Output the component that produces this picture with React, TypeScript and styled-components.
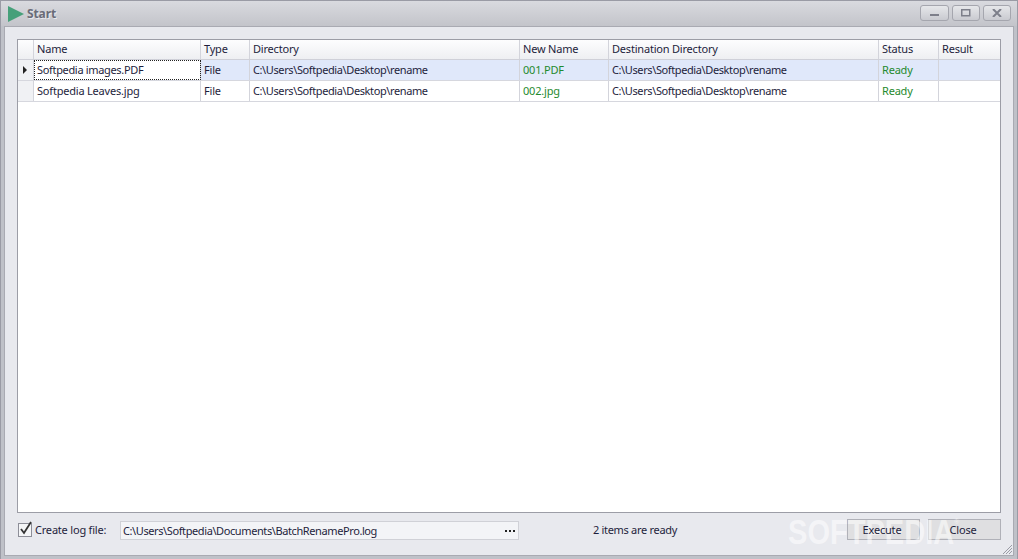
import React from "react";
import styled, { createGlobalStyle } from "styled-components";

const Global = createGlobalStyle`
  html, body { margin: 0; padding: 0; width: 1018px; height: 559px; overflow: hidden; }
  body { font-family: "Noto Sans", "DejaVu Sans", sans-serif; font-size: 11px; color: #1e1e3c; letter-spacing: -0.2px; }
`;

const Window = styled.div`
  width: 1018px; height: 559px; box-sizing: border-box;
  display: flex; flex-direction: column; position: relative;
  background: #bfc1c8; border: 1px solid #9a9ba5; border-bottom: 0;
`;
const TitleBar = styled.div`
  height: 25px; flex: none; display: flex; align-items: center; padding: 0 6px 0 7px;
  background: linear-gradient(#d9dadf, #c3c4ca);
`;
const TitleText = styled.div`
  margin-left: 3px; font-weight: 700; font-size: 12px; letter-spacing: -0.1px; color: #6a6c78; text-shadow: 1px 1px 0 #e8e8ec; flex: 1;
`;
const WinButtons = styled.div`display: flex; gap: 3px; margin-top: -1px;`;
const WinButton = styled.div<{ $w: number }>`
  width: ${(p) => p.$w}px; height: 16px; box-sizing: border-box; border: 1px solid #a5a6ae; border-radius: 3px;
  background: linear-gradient(#e6e7ea, #c9cad0); display: flex; align-items: center; justify-content: center;
`;
const Panel = styled.div`
  flex: 1; margin: 0 3px 3px 3px; background: #e8e9ee; border: 1px solid #a9aab2;
  padding: 12px 12px 0 12px; display: flex; flex-direction: column; min-height: 0; position: relative;
`;
const Grid = styled.div`
  height: 474px; flex: none; box-sizing: border-box; border: 1px solid #9c9da6; background: #fff;
`;
const Row = styled.div<{ $head?: boolean; $sel?: boolean }>`
  display: grid; grid-template-columns: 16px 167px 49px 270px 89px 270px 60px 61px;
  height: ${(p) => (p.$head ? 20 : 21)}px; box-sizing: border-box;
  border-bottom: 1px solid ${(p) => (p.$head ? "#cfd0d8" : "#d6d7de")};
  background: ${(p) => (p.$head ? "linear-gradient(#fdfdfe, #eeeff2)" : p.$sel ? "#e0e8fa" : "#fff")};
`;
const Cell = styled.div<{ $green?: boolean; $focus?: boolean; $last?: boolean; $head?: boolean; $path?: boolean }>`
  box-sizing: border-box; padding: 0 3px ${(p) => (p.$head ? 2 : 1)}px; display: flex; align-items: center; white-space: nowrap; overflow: hidden;
  border-right: ${(p) => (p.$last ? "0" : "1px solid #d3d4db")};
  color: ${(p) => (p.$green ? "#1f8a2e" : "#1e1e3c")};
  ${(p) => (p.$path ? "letter-spacing: -0.39px;" : "")}
  ${(p) => (p.$focus ? "background:#fff; outline: 1px dotted #222; outline-offset: -1px; letter-spacing: -0.33px;" : "")}
`;
const Indicator = styled(Cell)<{ $bare?: boolean }>`
  background: ${(p) => (p.$bare ? "linear-gradient(#fdfdfe, #eeeff2)" : "#f0f1f4")};
  justify-content: center; padding: 0 1px 0 0;
`;
const Arrow = styled.span`
  width: 0; height: 0; border-left: 4px solid #222; border-top: 4px solid transparent; border-bottom: 4px solid transparent;
`;
const Footer = styled.div`
  height: 45px; display: flex; align-items: center; padding-bottom: 9px; box-sizing: border-box;
`;
const Check = styled.div`
  width: 12px; height: 12px; flex: none; border: 1px solid #8d8e98; background: #f4f5f7; position: relative; margin: 0 3px 0 1px;
`;
const Tick = styled.svg`position: absolute; left: -1px; top: -4px;`;
const LogLabel = styled.div`width: 85px; flex: none;`;
const PathBox = styled.div`
  width: 399px; flex: none; height: 19px; margin-top: 1px; box-sizing: border-box; border: 1px solid #d0d1d7; background: #f3f4f7;
  display: flex; align-items: center; padding: 1px 2px 0; justify-content: space-between; letter-spacing: -0.4px;
`;
const Status = styled.div`width: 232px; flex: none; text-align: center; margin-top: 0; letter-spacing: -0.3px;`;
const ActionRow = styled.div`margin-left: auto; display: flex; gap: 8px; margin-bottom: 1px;`;
const ActionButton = styled.div`
  width: 73px; height: 21px; box-sizing: border-box; border: 1px solid #b0b1b8; background: #dfdfe1; padding: 1px 3px 0 0;
  display: flex; align-items: center; justify-content: center;
`;
const ActionLabel = styled.span`position: relative; z-index: 2;`;
const Grip = styled.svg`position: absolute; right: 0; bottom: 0;`;
const Watermark = styled.div`
  position: absolute; left: 787px; top: 513px; z-index: 1; font-family: "Liberation Sans", sans-serif; font-size: 35px; font-weight: 700;
  letter-spacing: 0; color: rgba(255,255,255,0.55); pointer-events: none; line-height: 35px; white-space: nowrap;
  transform: scaleX(0.83); transform-origin: left top;
`;
const WatermarkMark = styled.sup`font-size: 8px; font-weight: 400; vertical-align: 20px; line-height: 0;`;

const cols = ["Name", "Type", "Directory", "New Name", "Destination Directory", "Status", "Result"];
const dir = "C:\\Users\\Softpedia\\Desktop\\rename";
const rows = [
  { name: "Softpedia images.PDF", out: "001.PDF", sel: true },
  { name: "Softpedia Leaves.jpg", out: "002.jpg", sel: false },
];

export default function App() {
  return (
    <>
      <Global />
      <Window>
        <TitleBar>
          <svg width="16" height="16" viewBox="0 0 16 16"><path d="M0 0L16 8L0 16Z" fill="#46a07a" /></svg>
          <TitleText>Start</TitleText>
          <WinButtons>
            <WinButton $w={29}><svg width="10" height="8"><rect x="0" y="5" width="9" height="2" fill="#7d7f8a" /></svg></WinButton>
            <WinButton $w={28}><svg width="10" height="8"><rect x="0.75" y="0.75" width="8" height="6" fill="none" stroke="#7d7f8a" strokeWidth="1.5" /></svg></WinButton>
            <WinButton $w={28}><svg width="10" height="8"><path d="M1 0L9 8M9 0L1 8" stroke="#7d7f8a" strokeWidth="2" /></svg></WinButton>
          </WinButtons>
        </TitleBar>
        <Panel>
          <Grid>
            <Row $head>
              <Indicator $bare />
              {cols.map((c, i) => <Cell key={c} $head $last={i === 6}>{c}</Cell>)}
            </Row>
            {rows.map((r) => (
              <Row key={r.name} $sel={r.sel}>
                <Indicator>{r.sel && <Arrow />}</Indicator>
                <Cell $focus={r.sel}>{r.name}</Cell>
                <Cell>File</Cell>
                <Cell $path>{dir}</Cell>
                <Cell $green>{r.out}</Cell>
                <Cell $path>{dir}</Cell>
                <Cell $green>Ready</Cell>
                <Cell $last />
              </Row>
            ))}
          </Grid>
          <Footer>
            <Check>
              <Tick width="16" height="16" viewBox="0 0 16 16"><path d="M3 9L6 13L13 2" fill="none" stroke="#333" strokeWidth="1.8" /></Tick>
            </Check>
            <LogLabel>Create log file:</LogLabel>
            <PathBox>
              C:\Users\Softpedia\Documents\BatchRenamePro.log
              <svg width="12" height="4"><path d="M1 1h2v2H1zM5 1h2v2H5zM9 1h2v2H9z" fill="#222" /></svg>
            </PathBox>
            <Status>2 items are ready</Status>
            <ActionRow>
              <ActionButton><ActionLabel>Execute</ActionLabel></ActionButton>
              <ActionButton><ActionLabel>Close</ActionLabel></ActionButton>
            </ActionRow>
          </Footer>
          <Grip width="12" height="12" viewBox="0 0 12 12"><path d="M11 2L2 11M11 5L5 11M11 8L8 11" stroke="#9a9ba5" /></Grip>
        </Panel>
        <Watermark>SOFTPEDIA<WatermarkMark>®</WatermarkMark></Watermark>
      </Window>
    </>
  );
}
